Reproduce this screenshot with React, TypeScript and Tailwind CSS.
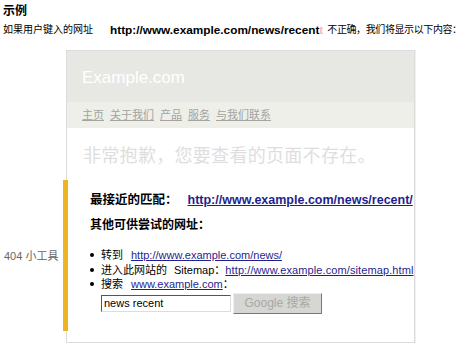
import React from "react";

const cjk = "font-['Liberation_Sans','Noto_Sans_CJK_SC',sans-serif]";

export default function App() {
  return (
    <div className={`w-[475px] h-[354px] bg-white overflow-hidden text-black ${cjk}`}>
      {/* Title */}
      <div className="pl-[3px] pt-[4px] h-[20px] text-[12px] font-bold leading-[14px]">示例</div>

      {/* Intro line */}
      <div className="pl-[3px] mt-[3px] h-[14px] flex items-center text-[10px] leading-[14px] whitespace-nowrap">
        <span>如果用户键入的网址</span>
        <span className="ml-[17px] text-[11.8px] font-bold">http://www.example.com/news/recent</span>
        <span className="text-[11.8px] font-bold text-[#f5b8c4]">t</span>
        <span className="ml-[4px] tracking-[-0.4px]">不正确，我们将显示以下内容：</span>
      </div>

      <div className="flex mt-[13px]">
        {/* Sidebar */}
        <div className="w-[66px] shrink-0 pl-[4px] pt-[198px] text-[11px] text-[#666] whitespace-nowrap">404 小工具</div>

        {/* Example page */}
        <div className="w-[349px] h-[293px] border border-[#dcdcdc] shadow-[1px_0_0_#f0f0f0] flex flex-col">
          <div className="h-[51px] bg-[#e7e7e3] pl-[15px] pt-[17px] text-[17px] leading-[20px] text-white">Example.com</div>
          <div className="h-[26px] bg-[#efefea] pl-[15px] flex items-center gap-[6px] text-[11px] text-[#a3a3a0] underline">
            <span>主页</span>
            <span>关于我们</span>
            <span>产品</span>
            <span>服务</span>
            <span>与我们联系</span>
          </div>
          <div className="pl-[16px] pt-[17px] h-[52px] text-[18px] leading-[22px] text-[#dedede] tracking-[0.3px] whitespace-nowrap">
            非常抱歉，您要查看的页面不存在。
          </div>

          <div className="-ml-[4px] border-l-[5px] border-[#eeb521] h-[151px] pl-[22px] pt-[12px] whitespace-nowrap">
            <div className="flex items-center h-[16px]">
              <span className="text-[12.5px] font-bold">最接近的匹配：</span>
              <span className="ml-[10px] text-[12.5px] font-bold text-[#1f1f8f] underline">http://www.example.com/news/recent/</span>
            </div>
            <div className="mt-[9px] h-[16px] flex items-center text-[12px] font-bold">其他可供尝试的网址：</div>

            <div className="mt-[15px] text-[11px] leading-[14.5px]">
              <div className="flex items-center">
                <span className="w-[4px] h-[4px] rounded-full bg-black mr-[7px]" />
                <span>转到</span>
                <span className="ml-[8px] text-[#1f1f8f] underline">http://www.example.com/news/</span>
              </div>
              <div className="flex items-center">
                <span className="w-[4px] h-[4px] rounded-full bg-black mr-[7px]" />
                <span>进入此网站的</span>
                <span className="ml-[7px]">Sitemap：</span>
                <span className="text-[#1f1f8f] underline tracking-[0.1px]">http://www.example.com/sitemap.html</span>
              </div>
              <div className="flex items-center">
                <span className="w-[4px] h-[4px] rounded-full bg-black mr-[7px]" />
                <span>搜索</span>
                <span className="ml-[8px] text-[#1f1f8f] underline">www.example.com</span>
                <span>：</span>
              </div>
              <div className="flex items-center pl-[11px] mt-[1px]">
                <div className="w-[130px] h-[17px] border border-t-[#555] border-l-[#555] border-r-[#ddd] border-b-[#ddd] bg-white pl-[2px] text-[11px] leading-[15px]">
                  news recent
                </div>
                <div className="ml-[2px] w-[89px] h-[21px] bg-[#d6d6d2] border border-t-[#eee] border-l-[#eee] border-r-[#777] border-b-[#777] flex items-center justify-center text-[12px] text-[#a8a8a8]">
                  Google 搜索
                </div>
              </div>
            </div>
          </div>
        </div>
      </div>
    </div>
  );
}
